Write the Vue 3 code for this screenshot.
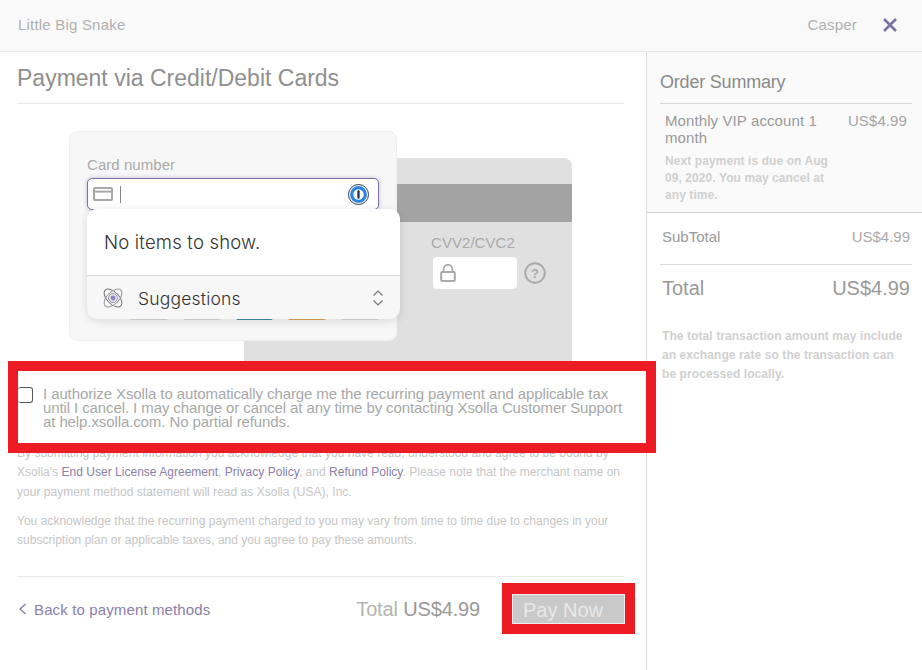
<script setup>
const brands = [
  { name: 'visa', color: '#d8d8d8' },
  { name: 'mastercard', color: '#d8d8d8' },
  { name: 'amex', color: '#3a8fa8' },
  { name: 'discover', color: '#e0a050' },
  { name: 'jcb', color: '#d8d8d8' }
];

const legalLinks = ['End User License Agreement', 'Privacy Policy', 'Refund Policy'];
</script>

<template>
  <div class="page">
    <header class="top-bar">
      <span class="merchant">Little Big Snake</span>
      <div class="top-right">
        <span class="user">Casper</span>
        <svg class="close" width="16" height="16" viewBox="0 0 16 16" aria-label="Close">
          <path d="M2 2 14 14M14 2 2 14" fill="none" stroke="#7c70a8" stroke-width="2.6" />
        </svg>
      </div>
    </header>

    <div class="columns">
      <main class="main">
        <h1 class="title">Payment via Credit/Debit Cards</h1>

        <div class="card-stage">
          <div class="card-back">
            <div class="stripe"></div>
            <div class="cvv">
              <label class="field-label">CVV2/CVC2</label>
              <div class="cvv-row">
                <div class="cvv-input">
                  <svg width="16" height="18" viewBox="0 0 16 18">
                    <path d="M3.6 8V5.2a4.4 4.4 0 0 1 8.8 0V8" fill="none" stroke="#aaa" stroke-width="1.8" />
                    <rect x="1.2" y="8" width="13.6" height="9" rx="1" fill="none" stroke="#aaa" stroke-width="2" />
                  </svg>
                </div>
                <svg width="22" height="22" viewBox="0 0 22 22">
                  <circle cx="11" cy="11" r="9.8" fill="none" stroke="#aaa" stroke-width="1.9" />
                  <text x="11" y="15.5" text-anchor="middle" class="help-mark">?</text>
                </svg>
              </div>
            </div>
          </div>

          <div class="card-front">
            <label class="field-label">Card number</label>
            <div class="number-wrap">
              <div class="number-input">
                <svg width="20" height="14" viewBox="0 0 20 14">
                  <rect x="1" y="1" width="18" height="12" rx="1" fill="none" stroke="#a8a8a8" stroke-width="2" />
                  <path d="M1 4.6h18" stroke="#a8a8a8" stroke-width="2" />
                </svg>
                <span class="caret"></span>
                <svg class="onepass" width="21" height="21" viewBox="0 0 21 21">
                  <circle cx="10.5" cy="10.5" r="10" fill="#fff" stroke="#2a3a55" stroke-width="1" />
                  <circle cx="10.5" cy="10.5" r="8.4" fill="#2b85e0" />
                  <circle cx="10.5" cy="10.5" r="5.2" fill="#fff" />
                  <rect x="9.4" y="6.2" width="2.2" height="8.6" rx="1" fill="#1c2a44" />
                </svg>
              </div>
              <div class="suggest-menu">
                <div class="suggest-empty">No items to show.</div>
                <div class="suggest-foot">
                  <svg width="24" height="24" viewBox="0 0 24 24">
                    <ellipse cx="12" cy="12" rx="11" ry="6" transform="rotate(45 12 12)" fill="none" stroke="#777" stroke-width="1" />
                    <ellipse cx="12" cy="12" rx="11" ry="6" transform="rotate(-45 12 12)" fill="none" stroke="#999" stroke-width="1" />
                    <circle cx="12" cy="12" r="4.5" fill="#e4e0f0" stroke="#888" stroke-width="0.8" />
                    <circle cx="12" cy="12" r="2.4" fill="#8f84c4" />
                  </svg>
                  <span class="suggest-text">Suggestions</span>
                  <svg class="updown" width="12" height="18" viewBox="0 0 12 18">
                    <path d="M1.5 6.5 6 2l4.5 4.5M1.5 11.5 6 16l4.5-4.5" fill="none" stroke="#777" stroke-width="1.2" />
                  </svg>
                </div>
              </div>
            </div>
            <div class="brands">
              <span
                v-for="brand in brands"
                :key="brand.name"
                class="brand"
                :style="{ borderBottomColor: brand.color }"
              ></span>
            </div>
          </div>
        </div>

        <div class="consent">
          <input class="consent-check" type="checkbox" />
          <p class="consent-text">
            I authorize Xsolla to automatically charge me the recurring payment and applicable tax
            until I cancel. I may change or cancel at any time by contacting Xsolla Customer Support
            at help.xsolla.com. No partial refunds.
          </p>
        </div>

        <div class="legal">
          <p>
            By submitting payment information you acknowledge that you have read, understood and agree to be bound by
            Xsolla's <a>{{ legalLinks[0] }}</a>, <a>{{ legalLinks[1] }}</a>, and <a>{{ legalLinks[2] }}</a>. Please note that the merchant name on
            your payment method statement will read as Xsolla (USA), Inc.
          </p>
          <p>
            You acknowledge that the recurring payment charged to you may vary from time to time due to changes in your
            subscription plan or applicable taxes, and you agree to pay these amounts.
          </p>
        </div>

        <footer class="footer">
          <a class="back">
            <svg width="9" height="12" viewBox="0 0 9 12">
              <path d="M7.5 1 2 6l5.5 5" fill="none" stroke="#8a80a8" stroke-width="1.4" />
            </svg>
            Back to payment methods
          </a>
          <div class="footer-right">
            <div class="footer-total">Total <span>US$4.99</span></div>
            <div class="pay-box"><button class="pay">Pay Now</button></div>
          </div>
        </footer>
      </main>

      <aside class="side">
        <div class="side-top">
          <h2 class="side-title">Order Summary</h2>
          <div class="item">
            <div class="item-info">
              <div class="item-name">Monthly VIP account 1 month</div>
              <div class="item-note">Next payment is due on Aug 09, 2020. You may cancel at any time.</div>
            </div>
            <div class="item-price">US$4.99</div>
          </div>
        </div>
        <div class="side-bottom">
          <div class="subtotal"><span>SubTotal</span><span class="light">US$4.99</span></div>
          <div class="total"><span>Total</span><span>US$4.99</span></div>
          <p class="side-note">The total transaction amount may include an exchange rate so the transaction can be processed locally.</p>
        </div>
      </aside>
    </div>
  </div>
</template>

<style>
html, body {
  margin: 0;
  background: #fff;
}
</style>

<style scoped>
.page {
  width: 922px;
  height: 670px;
  overflow: hidden;
  display: flex;
  flex-direction: column;
  font-family: "Liberation Sans", Arial, sans-serif;
  background: #fff;
}

.top-bar {
  flex: none;
  height: 52px;
  display: flex;
  align-items: center;
  justify-content: space-between;
  padding: 0 24px 2px 18px;
  box-sizing: border-box;
  background: #f9f9f9;
  border-bottom: 1px solid #e6e6e6;
  font-size: 15px;
  letter-spacing: 0.2px;
  color: #b0b0b0;
}

.top-right {
  display: flex;
  align-items: center;
  gap: 25px;
}

.close {
  display: block;
}

.columns {
  flex: 1;
  display: flex;
  min-height: 0;
}

.main {
  width: 647px;
  flex: none;
  box-sizing: border-box;
  border-right: 1px solid #ddd;
  padding: 0 22px 0 17px;
}

.title {
  margin: 0;
  height: 52px;
  box-sizing: border-box;
  padding-top: 12px;
  border-bottom: 1px solid #e8e8e8;
  font-size: 23px;
  line-height: 28px;
  font-weight: 400;
  color: #8f8f8f;
}

.card-stage {
  display: grid;
  margin-top: 27px;
}

.card-front,
.card-back {
  grid-area: 1 / 1;
  width: 328px;
  box-sizing: border-box;
}

.card-front {
  margin-left: 52px;
  height: 210px;
  padding: 25px 17px 0 17px;
  background: #f7f7f7;
  border: 1px solid #eee;
  border-radius: 8px;
  z-index: 1;
}

.card-back {
  margin: 27px 0 0 227px;
  height: 203px;
  padding-top: 26px;
  background: #e0e0e0;
  border-radius: 8px 8px 0 0;
}

.stripe {
  height: 38px;
  background: #a3a3a3;
}

.field-label {
  display: block;
  font-size: 15px;
  line-height: 16px;
  letter-spacing: 0.05px;
  color: #aaa;
}

.cvv {
  margin: 13px 0 0 187px;
}

.cvv-row {
  display: flex;
  align-items: center;
  gap: 7px;
  margin: 6px 0 0 2px;
}

.cvv-input {
  width: 84px;
  height: 32px;
  box-sizing: border-box;
  display: flex;
  align-items: center;
  padding-left: 7px;
  background: #fff;
  border-radius: 4px;
}

.help-mark {
  font-size: 13px;
  font-weight: 700;
  fill: #aaa;
  font-family: "Liberation Sans", Arial, sans-serif;
}

.number-wrap {
  position: relative;
  margin-top: 5px;
}

.number-input {
  width: 292px;
  height: 32px;
  box-sizing: border-box;
  display: flex;
  align-items: center;
  padding: 0 9px 0 5px;
  background: #fff;
  border: 1px solid #7b6fa8;
  border-radius: 5px;
  box-shadow: 0 0 4px rgba(123, 111, 168, 0.45);
}

.caret {
  width: 1px;
  height: 17px;
  margin-left: 7px;
  background: #888;
}

.onepass {
  margin-left: auto;
}

.suggest-menu {
  position: absolute;
  top: 31px;
  left: 0;
  width: 313px;
  height: 110px;
  background: #f7f7f7;
  border-radius: 10px;
  box-shadow: 0 2px 10px rgba(0, 0, 0, 0.12);
  overflow: hidden;
  z-index: 2;
  font-family: Inter, "Liberation Sans", sans-serif;
  font-weight: 300;
  color: #333;
  font-size: 17.5px;
  letter-spacing: 0.2px;
}

.suggest-empty {
  height: 67px;
  box-sizing: border-box;
  display: flex;
  align-items: center;
  padding-left: 17px;
  background: #fff;
  border-bottom: 1px solid #d4d4d4;
  font-size: 18.5px;
}

.suggest-foot {
  height: 43px;
  box-sizing: border-box;
  display: flex;
  align-items: center;
  padding: 1px 16px 0 14px;
}

.suggest-text {
  margin-left: 13px;
}

.updown {
  margin-left: auto;
}

.brands {
  display: flex;
  gap: 15px;
  margin: 0 0 0 43px;
  padding-top: 89px;
}

.brand {
  width: 38px;
  height: 21px;
  box-sizing: border-box;
  background: #fff;
  border: 1px solid #d8d8d8;
  border-bottom-width: 2px;
  border-radius: 2px;
}

.consent {
  position: relative;
  z-index: 2;
  width: 648px;
  height: 92px;
  margin-left: -9px;
  box-sizing: border-box;
  display: flex;
  align-items: flex-start;
  padding-top: 14px;
  background: #fff;
  border: 10px solid #ed1c24;
}

.consent-check {
  appearance: none;
  width: 15px;
  height: 16px;
  margin: 2px 0 0 0;
  flex: none;
  box-sizing: border-box;
  background: #fff;
  border: 1px solid #555;
  border-left: none;
  border-radius: 3px;
}

.consent-text {
  margin: 2px 0 0 10px;
  width: 585px;
  font-size: 15px;
  line-height: 14px;
  color: #a8a8a8;
  letter-spacing: -0.1px;
}

.legal {
  margin-top: -9.5px;
  font-size: 12px;
  line-height: 19.5px;
  color: #c6c6c6;
  letter-spacing: 0.02px;
}

.legal p {
  margin: 0 0 9.5px;
  width: 607px;
}

.legal a {
  color: #8a80a8;
}

.footer {
  margin-top: 25px;
  border-top: 1px solid #e8e8e8;
  padding-top: 6px;
  display: flex;
  align-items: center;
  justify-content: space-between;
}

.back {
  display: flex;
  align-items: center;
  gap: 7px;
  padding: 2px 0 0 1px;
  font-size: 15px;
  letter-spacing: 0.13px;
  color: #8a80a8;
}

.footer-right {
  display: flex;
  align-items: center;
  gap: 22px;
  margin-right: -11px;
}

.footer-total {
  padding-top: 3px;
  font-size: 20px;
  letter-spacing: -0.15px;
  color: #b4b4b4;
}

.footer-total span {
  color: #999;
}

.pay-box {
  border: 10px solid #ed1c24;
  border-width: 11px 10px 10px;
}

.pay {
  display: block;
  width: 113px;
  height: 30px;
  padding: 3px 0 0 10px;
  text-align: left;
  background: #c9c9c9;
  border: 1px solid #eee;
  font-family: inherit;
  font-size: 20px;
  color: #e8e8e8;
}

.side {
  flex: 1;
  min-width: 0;
}

.side-top {
  height: 161px;
  box-sizing: border-box;
  padding: 0 10px 0 13px;
  background: #fafafa;
  border-bottom: 1px solid #d2d2d2;
}

.side-title {
  margin: 0;
  height: 52px;
  box-sizing: border-box;
  padding-top: 20px;
  border-bottom: 1px solid #d8d8d8;
  font-size: 18px;
  line-height: 21px;
  letter-spacing: -0.2px;
  font-weight: 400;
  color: #8a8a8a;
}

.item {
  display: flex;
  justify-content: space-between;
  padding: 8px 5px 0;
}

.item-info {
  width: 170px;
}

.item-name {
  font-size: 15px;
  line-height: 17px;
  letter-spacing: 0.1px;
  color: #999;
}

.item-note {
  margin-top: 7px;
  font-size: 12px;
  line-height: 17px;
  letter-spacing: 0.08px;
  font-weight: 700;
  color: #d0d0d0;
}

.item-price {
  font-size: 15px;
  line-height: 17px;
  letter-spacing: 0.1px;
  color: #a4a4a4;
}

.side-bottom {
  padding: 0 10px 0 13px;
}

.subtotal,
.total {
  display: flex;
  justify-content: space-between;
  padding: 0 2px;
}

.subtotal {
  height: 52px;
  box-sizing: border-box;
  padding-top: 15px;
  border-bottom: 1px solid #dcdcdc;
  font-size: 15px;
  line-height: 18px;
  color: #999;
}

.subtotal .light {
  color: #aaa;
}

.total {
  margin-top: 11px;
  font-size: 20px;
  line-height: 24px;
  color: #999;
}

.side-note {
  margin: 27px 2px 0;
  width: 243px;
  font-size: 12px;
  line-height: 19px;
  letter-spacing: 0.08px;
  font-weight: 700;
  color: #d0d0d0;
}
</style>
